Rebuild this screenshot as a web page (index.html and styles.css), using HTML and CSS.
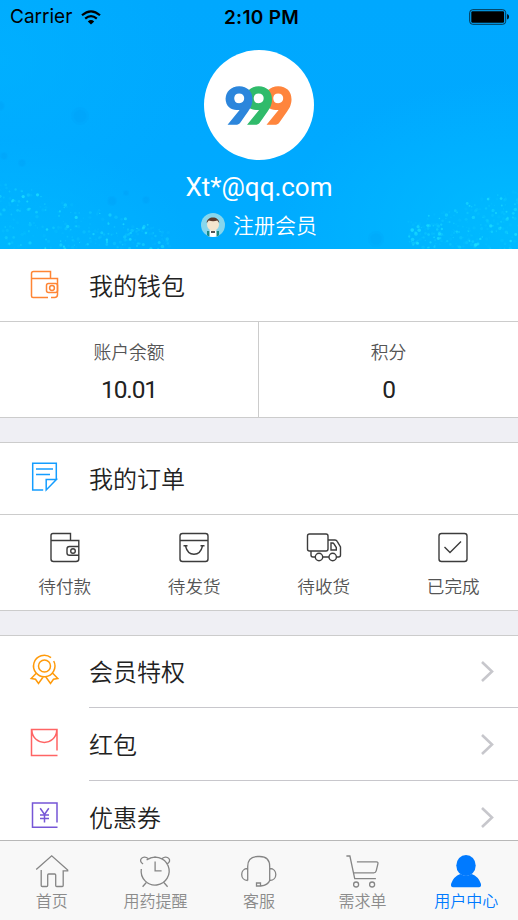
FILE: index.html
```html
<!DOCTYPE html>
<html lang="zh-CN">
<head>
<meta charset="utf-8">
<title>用户中心</title>
<link rel="stylesheet" href="styles.css">
</head>
<body>
<div class="app">
  <header class="hero">
    <svg class="spray" viewBox="0 0 518 249" aria-hidden="true"></svg>
    <div class="status">
      <div class="carrier"><span class="carrier-name">Carrier</span>
        <svg class="wifi" width="20" height="15" viewBox="81 9 20 15"><g fill="none" stroke="#000" stroke-width="2.2"><path d="M82 14.3Q91 6.300 100 14.300"/><path d="M85.200 17.600Q91 12.600 96.800 17.600"/></g><path d="M87.800 20.500Q91 17.600 94.200 20.500L91 23.600Z"/></svg>
      </div>
      <span class="time">2:10 PM</span>
      <svg class="battery" width="40" height="16" viewBox="469 9 40 16"><rect x="469.700" y="9.700" width="36" height="14.600" rx="3" fill="none" stroke="#06324a"/><rect x="471.300" y="11.300" width="32.800" height="11.400" rx="1.200"/><path d="M507.200 14v5.500q1.800-.7 1.800-2.700t-1.800-2.800z"/></svg>
    </div>
    <div class="avatar">
      <svg class="logo" width="110" height="110" viewBox="204 50 110 110">
        <g class="logo-text">
          <text fill="#ff853d" stroke="#ff853d" x="263.500" y="124.300">9</text>
          <text fill="#30bb6b" stroke="#30bb6b" x="244" y="124.300">9</text>
          <text fill="#2c86dc" stroke="#2c86dc" x="224.500" y="124.300">9</text>
        </g>
      </svg>
    </div>
    <div class="email">Xt*@qq.com</div>
    <div class="member">
      <svg width="24" height="24" viewBox="0 0 24 24"><defs><clipPath id="face"><circle cx="12" cy="12" r="12"/></clipPath></defs><g clip-path="url(#face)"><path fill="#86d6ed" d="M0 0h24v24H0z"/><path fill="#fff" d="M6 24v-5l4-2h4l4 2v5z"/><path fill="#178a88" d="M6 18h2.500v6H6zM15.500 18H18v6h-2.500z"/><ellipse cx="12" cy="11.500" rx="6" ry="6.500" fill="#f3e5ce"/><path fill="#5c3b2d" d="M5.700 10C5.500 2.500 18.300 2.500 18.300 10l-2-2.500q-4 1.500-8.600 0z"/><path fill="#555" d="M10 18h4v2h-4z"/></g></svg>
      <span>注册会员</span>
    </div>
  </header>

  <main class="content">
    <section class="group wallet">
      <div class="title-row">
        <svg class="icon orange" viewBox="28 268 34 34"><path d="M50.500 278v-6.500H33.500q-2 0-2 2V296q0 1.500 1.500 1.500h15M51 297.500H54.500q3 0 3-3v-16h-26"/><rect x="46.500" y="283.500" width="11" height="9" rx="2"/><circle cx="52" cy="288" r="2.400"/></svg>
        <h2>我的钱包</h2>
      </div>
      <div class="balances">
        <div class="balance"><span>账户余额</span><b>10.01</b></div>
        <div class="balance"><span>积分</span><b>0</b></div>
      </div>
    </section>

    <section class="group orders">
      <div class="title-row">
        <svg class="icon blue" viewBox="28 460 34 34"><path d="M56.300 479.500v-16.300H32.700V490h10.500M46.200 479.600h10.200L46.200 490zM36 469h17M36 474.500h14"/></svg>
        <h2>我的订单</h2>
      </div>
      <div class="order-tabs">
        <div class="order"><svg viewBox="46 529 38 38"><path d="M70.500 540.500v-7H53q-2 0-2 2V559q0 2.500 2.500 2.500H76q2.800 0 2.800-2.500v-18.500H51M78.500 546.500h-9q-2.500 0-2.500 2.500v4q0 2.200 2.500 2.200h9"/><circle cx="73" cy="551" r="2.300"/></svg><span>待付款</span></div>
        <div class="order"><svg viewBox="175.500 529 38 38"><rect x="180.500" y="533.500" width="28" height="28" rx="2.500"/><path d="M180.500 540.500h28M184 545.700h4M201 545.700h4M186 546q2 8.300 8.500 8.300t8.500-8.300"/></svg><span>待发货</span></div>
        <div class="order"><svg viewBox="305 529 38 38"><rect x="307.500" y="534" width="20.500" height="17" rx="2"/><path d="M328 540h7q1.500 0 2.200 1.300l3.300 5.700v8q0 2-2 2h-2M329 557h-6.500M315.200 557H313q-2 0-2-2v-4M331 543h1.500q1 0 1.500 1l2.300 3.500v2.500H331z"/><circle cx="319" cy="557" r="3.700"/><circle cx="332.700" cy="557" r="3.700"/></svg><span>待收货</span></div>
        <div class="order"><svg viewBox="434.500 529 38 38"><rect x="439.500" y="533.500" width="28" height="28" rx="2.500"/><path d="M445 547l5.500 5.500 11-11"/></svg><span>已完成</span></div>
      </div>
    </section>

    <section class="group menu">
      <div class="menu-row">
        <svg class="icon amber" viewBox="28 653 34 34"><path d="M51 657.700A10.700 10.700 0 1 0 53.700 661M36.500 673L31.200 678.500l4.300.8 3 4.200 4.800-6.800M52.500 673l5.300 5.500-4.300.8-3 4.200-4.800-6.800"/><circle cx="44.500" cy="666" r="6"/></svg>
        <div class="menu-body"><h2>会员特权</h2><svg class="chevron" viewBox="480 660 15 23"><path d="M482 662l10 9.500-10 9.500"/></svg></div>
      </div>
      <div class="menu-row">
        <svg class="icon red" viewBox="28 725 34 34"><path d="M57 750.500v-21H31.500v26h26M31.800 730c1 16.500 24 16.500 25 0"/></svg>
        <div class="menu-body"><h2>红包</h2><svg class="chevron" viewBox="480 660 15 23"><path d="M482 662l10 9.500-10 9.500"/></svg></div>
      </div>
      <div class="menu-row">
        <svg class="icon purple" viewBox="28 798 34 34"><path d="M57 822.500V803H32.500v24.200h25M40.200 808.300l4.300 6.200 4.300-6.200M44.500 814.500v8M40 815h9M40 818.500h9"/></svg>
        <div class="menu-body"><h2>优惠券</h2><svg class="chevron" viewBox="480 660 15 23"><path d="M482 662l10 9.500-10 9.500"/></svg></div>
      </div>
    </section>
  </main>

  <nav class="tabbar">
    <div class="tab"><svg viewBox="31.800 853 40 36"><path d="M36 869.500L51.500 855.800 67.500 870v.8H63v14.700q0 1-1 1h-5.500q-1 0-1-1V875q0-1-1-1h-6q-1 0-1 1v10.500q0 1-1 1H42q-1 0-1-1V870"/></svg><span>首页</span></div>
    <div class="tab"><svg viewBox="135.400 853 40 36"><path d="M141.700 869A14 14 0 1 0 147 860M148.500 859.200A14 14 0 0 1 162.500 859M143.500 864c-6-3 0-10 5-5.500M167.500 864c6-3 0-10-5-5.500M155.500 861.500v9.300h6.500M146.500 882.800l-3.500 4M164.500 882.800l3.500 4"/></svg><span>用药提醒</span></div>
    <div class="tab"><svg viewBox="239 853 40 36"><path d="M247.700 880.500v-14q0-10 10-10h2q10 0 10 10v14q-1.500 4.500-9 5.500M247.700 868.500c-8 0-8 12 0 12M269.800 868.500c8 0 8 12 0 12M256.500 883h4v3h-4z"/></svg><span>客服</span></div>
    <div class="tab"><svg viewBox="342.600 853 40 36"><path d="M346 856h3.500l4.800 22.700h21.200M356.500 861.800H376q2 0 1.500 2l-1.700 7q-.5 2-2.500 2h-20"/><circle cx="355.700" cy="884.500" r="2.500"/><circle cx="371.700" cy="884.500" r="2.500"/></svg><span>需求单</span></div>
    <div class="tab active"><svg viewBox="446.200 853 40 36"><ellipse cx="466.200" cy="865.500" rx="9.700" ry="10.500"/><path d="M460.500 874q5.700 3 11.400 0q6.700 2.500 9.100 9.500 1 3.700-2 3.700h-25.600q-3 0-2-3.700 2.400-7 9.100-9.500z"/></svg><span>用户中心</span></div>
  </nav>
</div>
<script src="spray.js"></script>
</body>
</html>
```
FILE: styles.css
```css
* { box-sizing: border-box; }
body {
  margin: 0;
  font-family: "Noto Sans CJK SC", sans-serif;
  font-weight: 350;
  color: #222;
  background: #fff;
}
h2, b { margin: 0; font-weight: inherit; }
svg { display: block; flex: none; }
.app { width: 518px; height: 920px; display: flex; flex-direction: column; overflow: hidden; }

.hero {
  position: relative;
  flex: none;
  height: 249px;
  display: flex;
  flex-direction: column;
  align-items: center;
  color: #fff;
  background:
    radial-gradient(ellipse 190px 100px at 0 240px, rgba(0, 190, 255, .6), transparent),
    radial-gradient(ellipse 240px 150px at 518px 230px, rgba(0, 192, 255, .75), transparent),
    radial-gradient(ellipse 190px 170px at 0 60px, rgba(0, 178, 255, .7), transparent),
    linear-gradient(#00a8fe, #00a9ff 60%, #00acff);
}
.spray { position: absolute; inset: 0; width: 518px; height: 249px; }
.status, .avatar, .email, .member { position: relative; }
.status {
  width: 100%;
  height: 34px;
  padding: 0 9px 0 10px;
  display: grid;
  grid-template-columns: 1fr auto 1fr;
  align-items: center;
  color: #000;
  font-family: Inter, sans-serif;
}
.carrier { display: flex; align-items: center; gap: 9px; }
.carrier-name { font-size: 19px; font-weight: 400; line-height: 34px; }
.time { font-size: 19px; font-weight: 600; letter-spacing: .3px; padding-left: 4px; }
.battery { justify-self: end; }
.avatar { width: 110px; height: 110px; margin-top: 16px; border-radius: 50%; background: #fff; overflow: hidden; }
.logo-text { font: 900 51px Lato, sans-serif; stroke-width: 1.6; }
.email { margin-top: 9px; font: 400 26px/36px Roboto, sans-serif; }
.member { display: flex; align-items: center; gap: 8px; margin-top: 6px; font-size: 21px; line-height: 30px; }
.member span { margin-top: -2px; }

.content { flex: 1; min-height: 0; overflow: hidden; background: #efeff4; }
.group { background: #fff; border-bottom: 1px solid #ccc; }
.group + .group { margin-top: 24px; border-top: 1px solid #ccc; }
.title-row { display: flex; align-items: center; height: 72px; padding-left: 28px; }
.orders .title-row { height: 71px; }
.orders h2 { margin-bottom: 2px; }
h2 { font-size: 24px; line-height: 34px; }
.icon { align-self: flex-start; width: 34px; height: 34px; margin: 17px 27px 0 0; fill: none; stroke-width: 1.5; }
.wallet .icon { margin-top: 19px; }
.orange { stroke: #ff8534; }
.blue { stroke: #149dff; }
.amber { stroke: #ff9a0a; }
.red { stroke: #ff6464; }
.purple { stroke: #7656d6; }

.balances { display: grid; grid-template-columns: 259px 1fr; height: 96px; border-top: 1px solid #ccc; }
.balance { display: flex; flex-direction: column; align-items: center; padding-top: 16px; }
.balance:first-child { border-right: 1px solid #ccc; }
.balance span { font-size: 17.8px; line-height: 26px; color: #555; }
.balance b { font: 400 24.500px/34px Roboto, sans-serif; letter-spacing: -1.1px; margin-top: 9px; }

.order-tabs { display: flex; height: 96px; border-top: 1px solid #ccc; }
.order { flex: 1; display: flex; flex-direction: column; align-items: center; padding-top: 14px; }
.order svg { width: 38px; height: 38px; fill: none; stroke: #3c3c3c; stroke-width: 1.4; }
.order span { margin-top: 6px; font-size: 17.600px; line-height: 26px; color: #555; }

.menu-row { display: flex; height: 73px; padding-left: 28px; }
.menu-row:first-child { height: 72px; }
.menu-row:first-child h2 { margin-bottom: 2px; }
.menu-body { flex: 1; display: flex; align-items: center; justify-content: space-between; padding-right: 23px; border-bottom: 1px solid #c8c7cc; }
.chevron { width: 15px; height: 23px; fill: none; stroke: #c7c7cc; stroke-width: 2.600; }

.tabbar { flex: none; display: flex; height: 80px; border-top: 1px solid #b8b8b8; background: #f8f8f8; color: #8b8b8b; }
.tab { flex: 1; display: flex; flex-direction: column; align-items: center; padding-top: 12px; }
.tab svg { width: 40px; height: 36px; fill: none; stroke: #858585; stroke-width: 1.3; }
.tab span { margin-top: -1px; font-size: 16px; line-height: 24px; white-space: nowrap; }
.active { color: #007aff; }
.tab.active svg { fill: #007aff; stroke: none; }
```
FILE: spray.js
```js
// Scatters water droplets over the lower corners of the header.
const svg = document.querySelector(".spray");
let seed = 17;
const rand = () => (seed = (seed * 16807) % 2147483647) / 2147483647;

function drop(x, y, r, color, opacity) {
  const c = document.createElementNS("http://www.w3.org/2000/svg", "circle");
  c.setAttribute("cx", x.toFixed(1));
  c.setAttribute("cy", y.toFixed(1));
  c.setAttribute("r", r.toFixed(2));
  c.setAttribute("fill", color);
  c.setAttribute("opacity", opacity.toFixed(2));
  svg.appendChild(c);
}

const glow = () => 0.08 + Math.pow(rand(), 3) * 0.7;

// Left bank: slopes down from the edge towards the centre.
for (let i = 0; i < 260; i++) {
  const x = Math.pow(rand(), 1.1) * 170;
  const top = 180 + x * 0.3;
  drop(x, top + rand() * (249 - top), 0.6 + rand() * 1.2, "#1de0ff", glow());
}
// Right bank: denser near the corner.
for (let i = 0; i < 260; i++) {
  const x = 518 - Math.pow(rand(), 1.4) * 110;
  const top = 188 + (518 - x) * 0.3;
  drop(x, top + rand() * (249 - top), 0.6 + rand() * 1.2, "#1de0ff", glow());
}
// Faint dark spots.
[[4, 156, 4], [22, 163, 4], [112, 201, 5], [146, 200, 4], [126, 193, 3], [80, 116, 9], [376, 239, 8], [0, 106, 5]]
  .forEach(([x, y, r]) => {
    drop(x, y, r, "#0090ea", 0.09);
    drop(x, y, r * 0.7, "#0090ea", 0.1);
  });
```
